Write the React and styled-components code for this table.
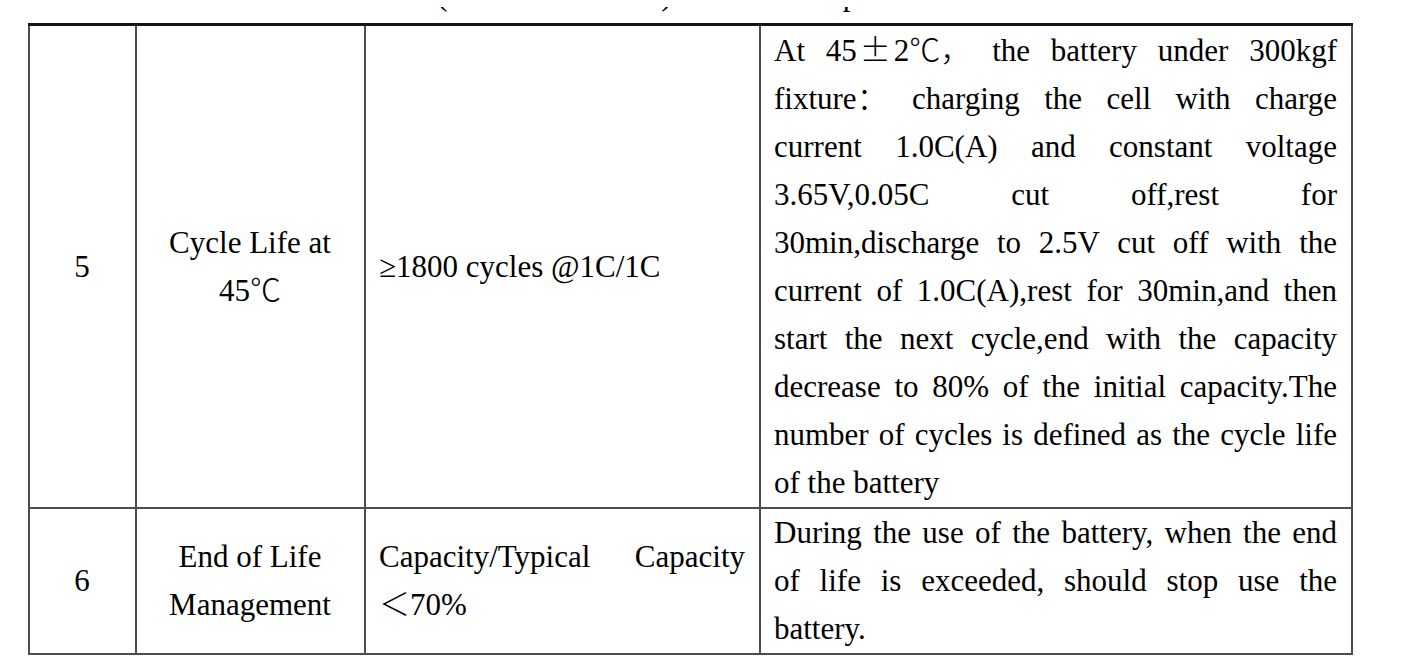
import React from 'react';
import styled, { createGlobalStyle } from 'styled-components';

const GlobalStyle = createGlobalStyle`
  html, body {
    margin: 0;
    padding: 0;
    background: #ffffff;
  }
  body {
    font-family: "Liberation Serif", "Times New Roman", "Noto Sans CJK SC", serif;
    color: #000;
  }
`;

const Page = styled.div`
  width: 1412px;
  height: 664px;
  overflow: hidden;
  padding: 7px 0 0 28px;
  box-sizing: border-box;
`;

// bottoms of the previous line of the document, cut by the window edge
const Fragments = styled.div`
  height: 16px;
  overflow: hidden;
  display: flex;
  align-items: flex-start;
`;

const Fragment = styled.span`
  display: inline-block;
  margin-top: -28px;
  margin-left: ${(p) => p.$gap}px;
  font-size: 31px;
  line-height: 31px;
`;

const Table = styled.table`
  border-collapse: collapse;
  table-layout: fixed;
  width: 1323px;
  border-top: 3px solid #151515;
`;

const Cell = styled.td`
  border: 2px solid #4d4d4d;
  border-top: ${(p) => (p.$first ? '3px solid #151515' : '2px solid #4d4d4d')};
  padding: ${(p) => p.$padTop}px 14px 0 13px;
  vertical-align: middle;
  text-align: ${(p) => p.$align || 'left'};
  font-size: 31px;
  line-height: 48px;
  color: #000;
`;

const Line = styled.div`
  text-align: ${(p) => (p.$justify ? 'justify' : 'left')};
  text-align-last: ${(p) => (p.$justify ? 'justify' : 'left')};
`;

const CenterLine = styled.div`
  text-align: center;
`;

// full-width punctuation and symbols, kept from growing the line box
const Cjk = styled.span`
  font-family: "Noto Sans CJK SC", sans-serif;
  font-weight: 300;
  line-height: 1;
  vertical-align: baseline;
  display: inline-block;
  height: 31px;
  overflow: visible;
  margin: 0 ${(p) => p.$space || 0}px;
`;

const testLines = [
  <>At 45<Cjk $space={3}>±</Cjk>2<Cjk>℃，</Cjk> the battery under 300kgf</>,
  <>fixture<Cjk>：</Cjk> charging the cell with charge</>,
  'current 1.0C(A) and constant voltage',
  '3.65V,0.05C cut off,rest for',
  '30min,discharge to 2.5V cut off with the',
  'current of 1.0C(A),rest for 30min,and then',
  'start the next cycle,end with the capacity',
  'decrease to 80% of the initial capacity.The',
  'number of cycles is defined as the cycle life',
  'of the battery',
];

const endLines = [
  'During the use of the battery, when the end',
  'of life is exceeded, should stop use the',
  'battery.',
];

function Paragraph({ lines }) {
  return lines.map((text, i) => (
    <Line key={i} $justify={i < lines.length - 1}>
      {text}
    </Line>
  ));
}

export default function App() {
  return (
    <>
      <GlobalStyle />
      <Page>
        <Fragments>
          <Fragment $gap={409}>(</Fragment>
          <Fragment $gap={214}>)</Fragment>
          <Fragment $gap={171}>p</Fragment>
        </Fragments>
        <Table>
          <colgroup>
            <col style={{ width: 107 }} />
            <col style={{ width: 229 }} />
            <col style={{ width: 395 }} />
            <col style={{ width: 592 }} />
          </colgroup>
          <tbody>
            <tr>
              <Cell $first $padTop={1} $align="center">5</Cell>
              <Cell $first $padTop={1} $align="center">
                <CenterLine>Cycle Life at</CenterLine>
                <CenterLine>45<Cjk>℃</Cjk></CenterLine>
              </Cell>
              <Cell $first $padTop={1}>≥1800 cycles @1C/1C</Cell>
              <Cell $first $padTop={1}>
                <Paragraph lines={testLines} />
              </Cell>
            </tr>
            <tr>
              <Cell $padTop={0} $align="center">6</Cell>
              <Cell $padTop={0} $align="center">
                <CenterLine>End of Life</CenterLine>
                <CenterLine>Management</CenterLine>
              </Cell>
              <Cell $padTop={0}>
                <Line $justify>Capacity/Typical Capacity</Line>
                <Line><Cjk>＜</Cjk>70%</Line>
              </Cell>
              <Cell $padTop={0}>
                <Paragraph lines={endLines} />
              </Cell>
            </tr>
          </tbody>
        </Table>
      </Page>
    </>
  );
}
